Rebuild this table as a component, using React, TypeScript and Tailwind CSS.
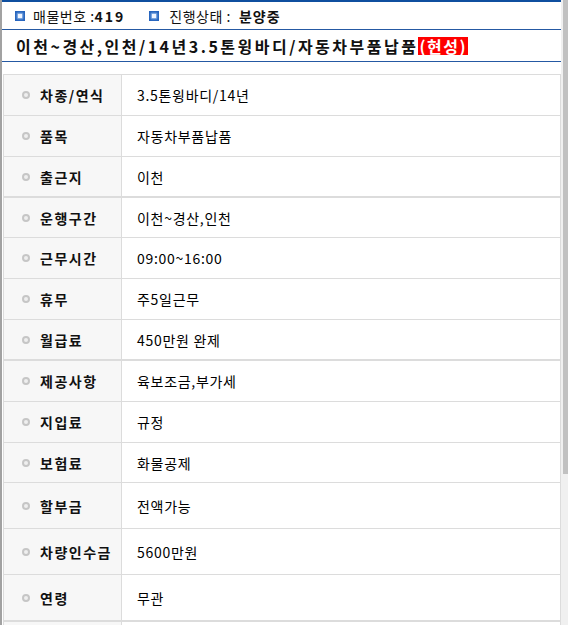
import React from "react";

type Row = [string, string, number];

const H: Record<number, string> = {
  39: "h-[39px]",
  40: "h-[40px]",
  45: "h-[45px]",
};

const groups: Row[][] = [
  [
    ["차종/연식", "3.5톤윙바디/14년", 40],
    ["품목", "자동차부품납품", 40],
    ["출근지", "이천", 39],
  ],
  [
    ["운행구간", "이천~경산,인천", 39],
    ["근무시간", "09:00~16:00", 40],
    ["휴무", "주5일근무", 40],
    ["월급료", "450만원 완제", 39],
  ],
  [
    ["제공사항", "육보조금,부가세", 40],
    ["지입료", "규정", 40],
    ["보험료", "화물공제", 39],
    ["할부금", "전액가능", 45],
    ["차량인수금", "5600만원", 45],
    ["연령", "무관", 45],
  ],
  [["", "", 40]],
];

function BlueSquare() {
  return (
    <span className="w-[10px] h-[10px] bg-[#2463bd] flex items-center justify-center shrink-0">
      <span className="w-[4px] h-[4px] bg-[#eef4ff] shadow-[0_0_2px_1px_#9cc0ee]" />
    </span>
  );
}

function Bullet() {
  return (
    <span className="w-[8px] h-[8px] rounded-full border-2 border-[#c6c6c6] bg-[#efefef] shrink-0" />
  );
}

export default function App() {
  return (
    <div
      className="w-[568px] h-[625px] overflow-hidden flex bg-white text-[#111]"
      style={{ fontFamily: '"Noto Sans CJK KR", "Noto Sans", sans-serif' }}
    >
      <div className="w-[2px] shrink-0 bg-[#a2a2a2]" />
      <div className="w-[559px] shrink-0 flex flex-col">
        <div className="h-[2px] shrink-0 bg-[#0f4f9f]" />
        <div className="h-[27px] shrink-0 flex items-center pl-[13px] text-[14px] tracking-[0.5px] leading-none">
          <BlueSquare />
          <span className="ml-[8px]">매물번호 :</span>
          <span className="font-bold tracking-[2px]">419</span>
          <span className="ml-[24px]">
            <BlueSquare />
          </span>
          <span className="ml-[10px]">진행상태 : </span>
          <span className="font-bold ml-[8px] tracking-[1px]">분양중</span>
        </div>
        <div className="h-[1px] shrink-0 bg-[#2559a3]" />
        <div className="h-[31px] shrink-0 flex items-center pl-[14px] text-[16px] font-bold tracking-[2.5px] leading-none">
          <span>이천~경산,인천/14년3.5톤윙바디/자동차부품납품</span>
          <span className="bg-[#ff0000] text-white px-[1px] py-[1px] tracking-[1.5px]">(현성)</span>
        </div>
        <div className="h-[1px] shrink-0 bg-[#2559a3]" />
        <div className="h-[12px] shrink-0" />
        <div className="ml-[1px] w-[558px] shrink-0 flex flex-col">
          {groups.map((g, gi) => (
            <div key={gi} className="shrink-0 border-t border-l border-r border-[#dcdcdc] flex flex-col">
              {g.map(([label, value, h], ri) => (
                <div key={ri} className={`shrink-0 flex border-b border-[#dcdcdc] ${H[h]} box-content`}>
                  <div className="w-[118px] shrink-0 bg-[#f7f7f7] border-r border-[#dcdcdc] flex items-center pl-[18px] gap-[10px]">
                    {label && <Bullet />}
                    <span className="text-[14px] font-bold tracking-[1.5px] whitespace-nowrap leading-none">
                      {label}
                    </span>
                  </div>
                  <div className="flex-1 flex items-center pl-[15px] text-[14px] tracking-[0.7px] text-black leading-none">
                    {value}
                  </div>
                </div>
              ))}
            </div>
          ))}
        </div>
      </div>
      <div className="w-[7px] shrink-0 bg-[#f0f0f0] flex flex-col">
        <div className="h-[474px] w-[5px] ml-[2px] shrink-0 bg-[#c1c1c1]" />
      </div>
    </div>
  );
}
